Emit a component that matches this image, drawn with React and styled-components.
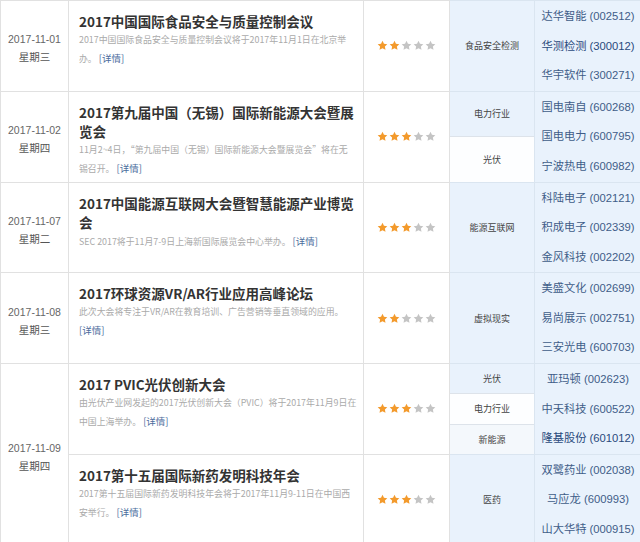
import React from 'react';
import styled, { createGlobalStyle } from 'styled-components';

const GlobalStyle = createGlobalStyle`
  body {
    margin: 0;
    background: #fff;
    font-family: "Liberation Sans", "Noto Sans CJK SC", sans-serif;
  }
`;

// desc is kept as the lines the original page shows
const events = [
  {
    date: '2017-11-01', week: '星期三',
    title: '2017中国国际食品安全与质量控制会议',
    desc: ['2017中国国际食品安全与质量控制会议将于2017年11月1日在北京举', '办。'],
    stars: 2,
    industries: [{ name: '食品安全检测' }],
    stocks: [{ name: '达华智能 (002512)' }, { name: '华测检测 (300012)', dark: true }, { name: '华宇软件 (300271)' }],
  },
  {
    date: '2017-11-02', week: '星期四',
    title: '2017第九届中国（无锡）国际新能源大会暨展览会',
    desc: ['11月2~4日，“第九届中国（无锡）国际新能源大会暨展览会”将在无', '锡召开。'],
    stars: 3,
    industries: [{ name: '电力行业' }, { name: '光伏', tone: 'white' }],
    stocks: [{ name: '国电南自 (600268)' }, { name: '国电电力 (600795)' }, { name: '宁波热电 (600982)' }],
  },
  {
    date: '2017-11-07', week: '星期二',
    title: '2017中国能源互联网大会暨智慧能源产业博览会',
    desc: ['SEC 2017将于11月7-9日上海新国际展览会中心举办。'],
    stars: 3,
    industries: [{ name: '能源互联网' }],
    stocks: [{ name: '科陆电子 (002121)' }, { name: '积成电子 (002339)' }, { name: '金风科技 (002202)' }],
  },
  {
    date: '2017-11-08', week: '星期三',
    title: '2017环球资源VR/AR行业应用高峰论坛',
    desc: ['此次大会将专注于VR/AR在教育培训、广告营销等垂直领域的应用。', ''],
    stars: 2,
    industries: [{ name: '虚拟现实' }],
    stocks: [{ name: '美盛文化 (002699)' }, { name: '易尚展示 (002751)' }, { name: '三安光电 (600703)' }],
  },
  {
    date: '2017-11-09', week: '星期四', span: 2,
    title: '2017 PVIC光伏创新大会',
    desc: ['由光伏产业网发起的2017光伏创新大会（PVIC）将于2017年11月9日在', '中国上海举办。'],
    stars: 3,
    industries: [{ name: '光伏' }, { name: '电力行业', tone: 'white' }, { name: '新能源', tone: 'pale' }],
    stocks: [{ name: '亚玛顿 (002623)' }, { name: '中天科技 (600522)' }, { name: '隆基股份 (601012)', dark: true }],
  },
  {
    title: '2017第十五届国际新药发明科技年会',
    desc: ['2017第十五届国际新药发明科技年会将于2017年11月9-11日在中国西', '安举行。'],
    stars: 3,
    industries: [{ name: '医药' }],
    stocks: [{ name: '双鹭药业 (002038)' }, { name: '马应龙 (600993)' }, { name: '山大华特 (000915)' }],
  },
];

const tones = {
  blue: 'transparent',
  white: '#fdfeff',
  pale: '#f4f8fc',
};

const Table = styled.table`
  width: 641px;
  table-layout: fixed;
  border-collapse: collapse;
`;

const Row = styled.tr``;

const Cell = styled.td`
  box-sizing: border-box;
  height: 90.75px;
  padding: 0;
  border: 1px solid #e1e1e1;
  vertical-align: middle;
  background: ${p => (p.$blue ? '#e9f2fc' : '#fff')};
  border-color: ${p => (p.$blue ? '#dae5f0' : '#e1e1e1')};
`;

const DateCell = styled(Cell)`
  text-align: center;
  padding-top: 5px;
  color: #666;
  font-size: 10.5px;
  line-height: 18px;
`;

const Week = styled.div`
  color: #555;
  font-family: "Noto Sans CJK SC", sans-serif;
`;

const TitleCell = styled(Cell)`
  vertical-align: top;
  padding: 11px 4px 0 10px;
`;

const Title = styled.div`
  font-family: "Noto Sans CJK SC", sans-serif;
  font-size: 13.5px;
  font-weight: 700;
  line-height: 19px;
  color: #333;
`;

const Desc = styled.div`
  font-family: "Noto Sans CJK SC", sans-serif;
  font-size: 8.9px;
  line-height: 18px;
  color: #aaa;
  white-space: nowrap;
`;

const More = styled.a`
  color: #4b6c9c;
  font-size: 9.5px;
  text-decoration: none;
`;

const StarCell = styled(Cell)`
  text-align: center;
`;

const Stars = styled.div`
  display: flex;
  justify-content: center;
  gap: 1px;
`;

const StarIcon = ({ on }) => (
  <svg width="11" height="11" viewBox="0 0 24 24">
    <polygon
      fill={on ? '#f39a2c' : '#c4c4c4'}
      points="12,1.5 15.2,8.1 22.5,9.1 17.2,14.2 18.5,21.5 12,18 5.5,21.5 6.8,14.2 1.5,9.1 8.8,8.1"
    />
  </svg>
);

const IndustryCell = styled(Cell)``;

const IndustryList = styled.div`
  display: flex;
  flex-direction: column;
  height: 100%;
`;

const Industry = styled.div`
  flex: 1;
  display: flex;
  align-items: center;
  justify-content: center;
  font-family: "Noto Sans CJK SC", sans-serif;
  font-size: 9px;
  color: #444;
  background: ${p => tones[p.$tone || 'blue']};
  & + & {
    border-top: 1px solid #dde3ea;
  }
`;

const StockCell = styled(Cell)``;

const StockList = styled.div`
  display: flex;
  flex-direction: column;
  justify-content: center;
  padding-top: 1px;
`;

const Stock = styled.a`
  display: block;
  text-align: center;
  line-height: 29.5px;
  font-size: 11.25px;
  color: ${p => (p.$dark ? '#2a4a7c' : '#3f5d88')};
  text-decoration: none;
`;

export default function App() {
  return (
    <>
      <GlobalStyle />
      <Table>
        <colgroup>
          <col style={{ width: 68 }} />
          <col style={{ width: 295 }} />
          <col style={{ width: 86 }} />
          <col style={{ width: 85 }} />
          <col style={{ width: 107 }} />
        </colgroup>
        <tbody>
          {events.map((ev, i) => (
            <Row key={i}>
              {ev.date && (
                <DateCell rowSpan={ev.span || 1}>
                  <div>{ev.date}</div>
                  <Week>{ev.week}</Week>
                </DateCell>
              )}
              <TitleCell>
                <Title>{ev.title}</Title>
                {ev.desc.map((line, n) => (
                  <Desc key={n}>
                    {line}
                    {n === ev.desc.length - 1 && (
                      <>
                        {line && ' '}
                        <More href="#">[详情]</More>
                      </>
                    )}
                  </Desc>
                ))}
              </TitleCell>
              <StarCell>
                <Stars>
                  {[0, 1, 2, 3, 4].map(n => (
                    <StarIcon key={n} on={n < ev.stars} />
                  ))}
                </Stars>
              </StarCell>
              <IndustryCell $blue>
                <IndustryList>
                  {ev.industries.map(ind => (
                    <Industry key={ind.name} $tone={ind.tone}>{ind.name}</Industry>
                  ))}
                </IndustryList>
              </IndustryCell>
              <StockCell $blue>
                <StockList>
                  {ev.stocks.map(s => (
                    <Stock key={s.name} href="#" $dark={s.dark}>{s.name}</Stock>
                  ))}
                </StockList>
              </StockCell>
            </Row>
          ))}
        </tbody>
      </Table>
    </>
  );
}
